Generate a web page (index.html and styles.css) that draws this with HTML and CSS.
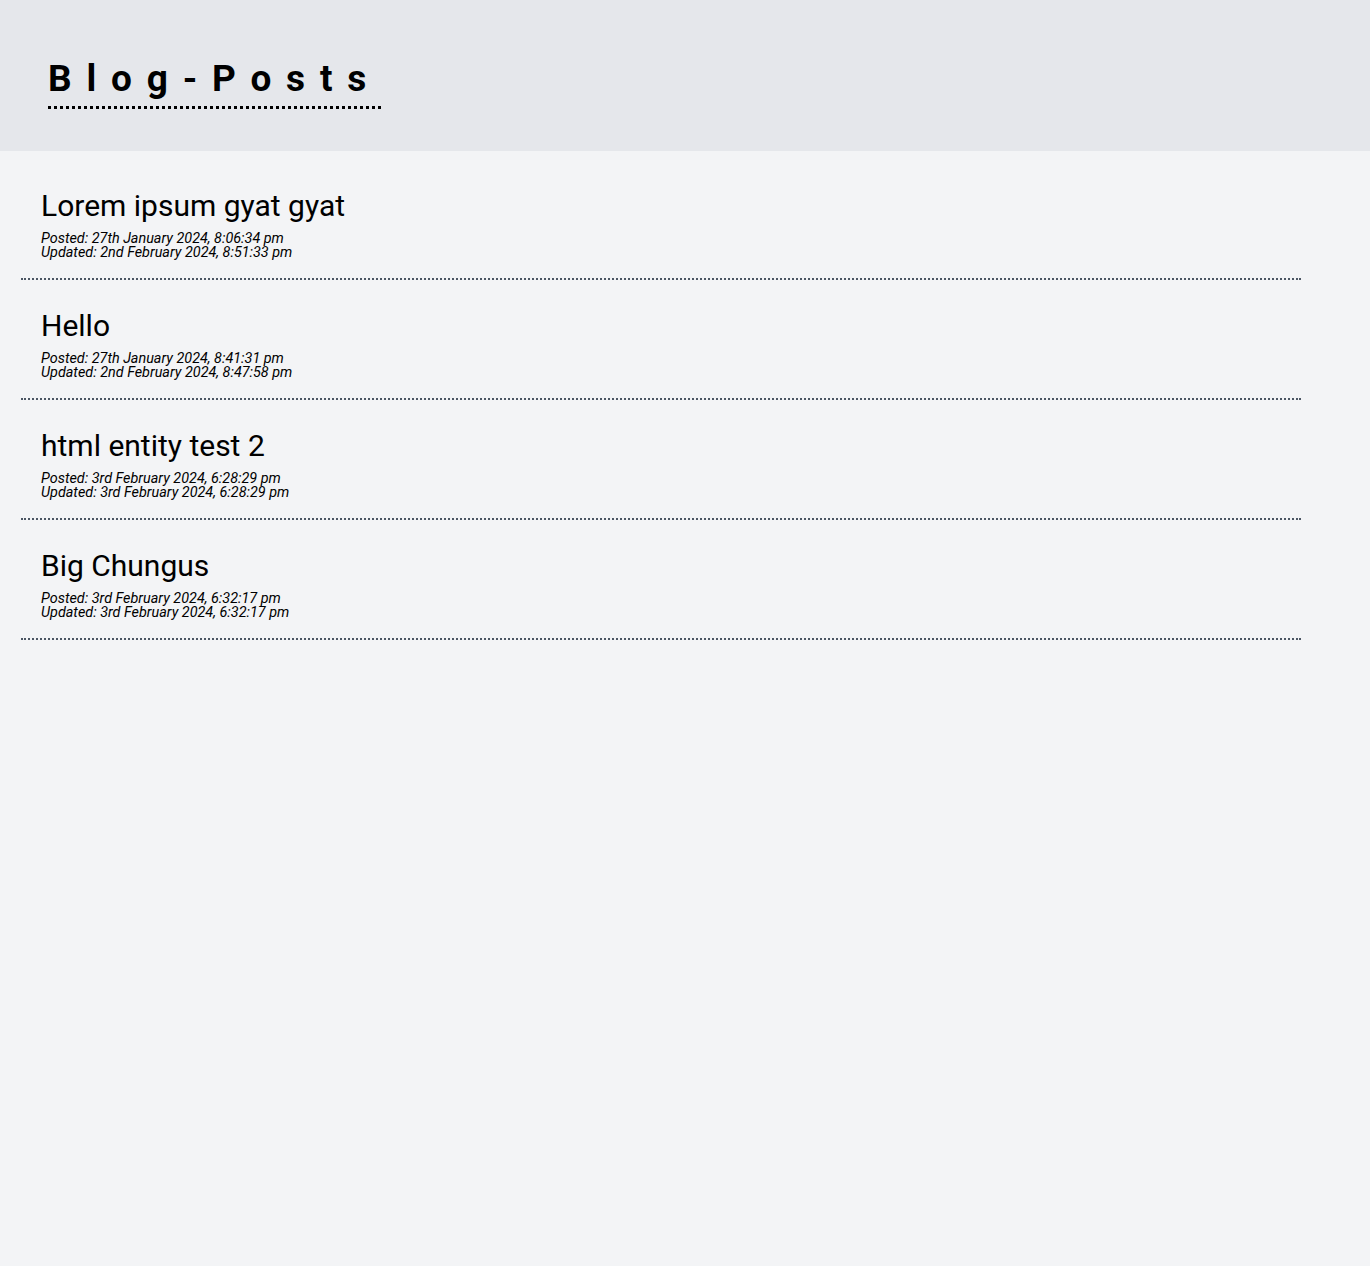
FILE: index.html
```html
<!DOCTYPE html>
<html lang="en">
<head>
<meta charset="utf-8">
<title>Blog-Posts</title>
<link rel="stylesheet" href="styles.css">
</head>
<body>
<header class="site-header">
  <h1 class="site-title">Blog-Posts</h1>
</header>
<main class="posts">
  <article class="post">
    <h2 class="post-title">Lorem ipsum gyat gyat</h2>
    <p class="post-meta">Posted: 27th January 2024, 8:06:34 pm<br>Updated: 2nd February 2024, 8:51:33 pm</p>
  </article>
  <article class="post">
    <h2 class="post-title">Hello</h2>
    <p class="post-meta">Posted: 27th January 2024, 8:41:31 pm<br>Updated: 2nd February 2024, 8:47:58 pm</p>
  </article>
  <article class="post">
    <h2 class="post-title">html entity test 2</h2>
    <p class="post-meta">Posted: 3rd February 2024, 6:28:29 pm<br>Updated: 3rd February 2024, 6:28:29 pm</p>
  </article>
  <article class="post">
    <h2 class="post-title">Big Chungus</h2>
    <p class="post-meta">Posted: 3rd February 2024, 6:32:17 pm<br>Updated: 3rd February 2024, 6:32:17 pm</p>
  </article>
</main>
</body>
</html>
```
FILE: styles.css
```css
html, body {
  margin: 0;
  padding: 0;
}
body {
  background: #f3f4f6;
  font-family: Roboto, "Liberation Sans", sans-serif;
  color: #000;
  min-height: 1266px;
}
.site-header {
  background: #e5e7eb;
  height: 151px;
  box-sizing: border-box;
  padding: 51px 0 0 48px;
}
.site-title {
  display: inline-block;
  margin: 0;
  font-size: 37px;
  font-weight: 700;
  line-height: 55px;
  letter-spacing: 0.4em;
  border-bottom: 3px dotted #000;
}
.posts {
  width: 1280px;
  margin-left: 21px;
  padding-top: 9px;
}
.post {
  padding: 28px 20px 18px;
  border-bottom: 2px dotted #4b5563;
}
.post-title {
  margin: 0 0 8px;
  font-size: 30px;
  font-weight: 400;
  line-height: 36px;
}
.post-meta {
  margin: 0;
  font-size: 14.4px;
  font-style: italic;
  line-height: 14px;
}
```
